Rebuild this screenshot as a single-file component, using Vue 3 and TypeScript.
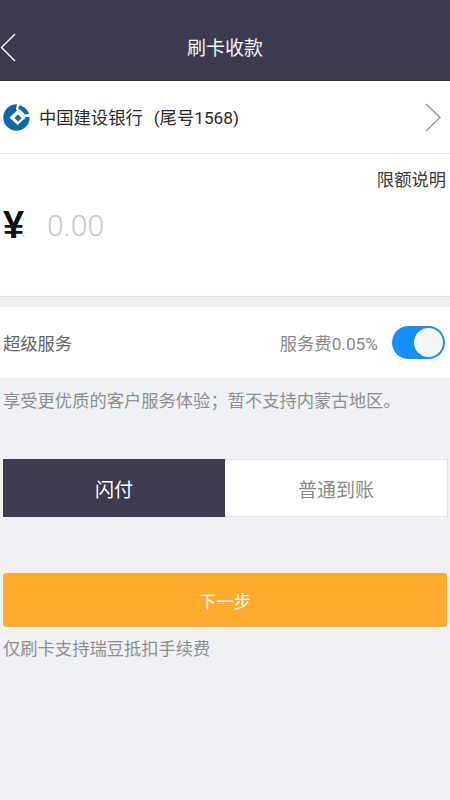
<script setup lang="ts">
const title = '刷卡收款'
</script>

<template>
  <div class="page">
    <header class="nav">
      <svg class="back" width="16" height="30" viewBox="0 0 16 30"><path d="M15 1 L1.5 14.5 L15 28" fill="none" stroke="#fff" stroke-width="1.4"/></svg>
      <span class="title">{{ title }}</span>
    </header>
    <section class="bank">
      <svg class="logo" width="27" height="27" viewBox="0 0 27 27">
        <circle cx="13.5" cy="13.5" r="13.2" fill="#0f67a8"/>
        <path d="M14.5 6 L22.5 14 L14.5 21 L6.5 13.5 Z" fill="#fff"/>
        <path d="M15 10.4 L18.6 14 L15 17.4 L11.4 13.8 Z" fill="#0f67a8"/>
        <path d="M14 0 L27 0 L27 13 L21.5 13 L13 5.5 Z" fill="#fff"/>
        <path d="M16.5 1.2 C20.8 2.2 24.6 5.6 26.2 9.8 L21.8 10.6 C20.2 8 18 5.8 15 4.4 Z" fill="#0f67a8"/>
      </svg>
      <span class="bank-name">中国建设银行<span class="card">(尾号1568)</span></span>
      <svg class="arrow" width="16" height="29" viewBox="0 0 16 29"><path d="M1 1 L15 14.5 L1 28" fill="none" stroke="#999" stroke-width="1.4"/></svg>
    </section>
    <section class="amount">
      <div class="limit">限额说明</div>
      <div class="amount-row">
        <span class="yen">¥</span>
        <span class="zero">0.00</span>
      </div>
    </section>
    <section class="service">
      <span class="service-name">超级服务</span>
      <span class="fee">服务费0.05%</span>
      <span class="switch"><span class="knob"></span></span>
    </section>
    <p class="tip">享受更优质的客户服务体验；暂不支持内蒙古地区。</p>
    <div class="tabs">
      <div class="tab active">闪付</div>
      <div class="tab">普通到账</div>
    </div>
    <button class="next">下一步</button>
    <p class="note">仅刷卡支持瑞豆抵扣手续费</p>
  </div>
</template>

<style>
html, body { margin: 0; background: #eff1f5; }
</style>

<style scoped>
.page {
  width: 450px;
  height: 800px;
  overflow: hidden;
  background: #eff1f5;
  font-family: "Roboto", "Noto Sans CJK SC", sans-serif;
  display: flex;
  flex-direction: column;
}
.nav {
  height: 81px;
  box-sizing: border-box;
  background: #3c3b4f;
  border-bottom: 1px solid #2f2e3e;
  display: flex;
  align-items: center;
  justify-content: center;
  padding-top: 17px;
  position: relative;
}
.back { position: absolute; left: 0; top: 33px; }
.title { color: #f4f4f6; font-size: 19px; line-height: 26px; }
.bank {
  height: 73px;
  box-sizing: border-box;
  background: #fff;
  border-bottom: 1px solid #e6e6e8;
  display: flex;
  align-items: center;
  padding: 0 9px 0 3px;
}
.logo { flex: none; }
.bank-name { flex: 1; margin: 0 0 1px 9px; font-size: 17.3px; color: #2a2a2a; white-space: nowrap; }
.card { margin-left: 11px; }
.amount {
  height: 143px;
  box-sizing: border-box;
  background: #fff;
  border-bottom: 1px solid #dfdfe3;
  padding: 14px 4px 0 3px;
}
.limit { text-align: right; font-size: 17.3px; line-height: 24px; color: #3a3a3a; }
.amount-row { display: flex; align-items: center; height: 44px; margin-top: 11px; }
.yen { width: 45px; font-size: 38px; font-weight: 700; color: #111; font-family: "Liberation Sans", sans-serif; line-height: 44px; }
.zero { font-size: 30px; color: #c8c8c8; font-weight: 300; margin-left: -1px; }
.service {
  margin-top: 10px;
  height: 71px;
  background: #fff;
  display: flex;
  align-items: center;
  padding: 0 5px 0 3px;
}
.service-name { flex: 1; font-size: 17.3px; color: #666; }
.fee { font-size: 17.3px; color: #8a8a8a; margin-right: 14px; }
.switch {
  width: 53px;
  height: 33px;
  box-sizing: border-box;
  border-radius: 17px;
  background: #1491f8;
  display: flex;
  justify-content: flex-end;
  padding: 2px;
}
.knob { width: 29px; height: 29px; border-radius: 50%; background: #f7f7f7; }
.tip { margin: 11px 0 0 3px; font-size: 17.3px; line-height: 24px; color: #8f8f8f; white-space: nowrap; }
.tabs {
  margin: 46px 2px 0 3px;
  height: 58px;
  display: flex;
}
.tab {
  flex: 1;
  box-sizing: border-box;
  display: flex;
  align-items: center;
  justify-content: center;
  background: #fff;
  border: 1px solid #e4e4e8;
  border-left: 0;
  color: #8a8a8a;
  font-size: 19px;
}
.tab.active { background: #3c3b4f; border: 0; color: #fff; }
.next {
  margin: 56px 3px 0;
  height: 54px;
  border: 0;
  border-radius: 3px;
  background: #ffab2e;
  color: #fff;
  font-family: inherit;
  font-size: 17.3px;
}
.note { margin: 10px 0 0 3px; font-size: 17.3px; line-height: 24px; color: #8f8f8f; }
</style>
